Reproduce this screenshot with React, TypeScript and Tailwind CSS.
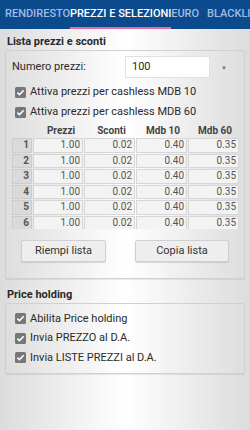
import React from 'react';

const rows = [1, 2, 3, 4, 5, 6];
const values = ['1.00', '0.02', '0.40', '0.35'];

const CheckIcon = () => (
  <svg width="11" height="11" viewBox="0 0 11 11" className="shrink-0">
    <rect x="0" y="0" width="11" height="11" rx="1.5" fill="#777777" />
    <path d="M2.4 5.6 L4.5 7.6 L8.7 3.2" fill="none" stroke="#ffffff" strokeWidth="1.5" />
  </svg>
);

const CheckRow: React.FC<{ label: string; h?: string }> = ({ label, h = 'h-[20px]' }) => (
  <div className={`flex items-center gap-[4px] pl-[9px] ${h}`}>
    <CheckIcon />
    <span className="text-[11px] text-[#2a2a2a]">{label}</span>
  </div>
);

const App: React.FC = () => {
  return (
    <div
      className="w-[250px] h-[430px] overflow-hidden bg-[linear-gradient(to_right,#dcdcdc,#ffffff_50%,#dcdcdc)]"
      style={{ fontFamily: 'Roboto, "Liberation Sans", sans-serif' }}
    >
      {/* tab bar */}
      <div className="h-[29px] bg-[#0c4a8e] flex pl-[5px] text-[11px] font-medium whitespace-nowrap">
        <div className="w-[70px] flex items-center justify-center text-[#9fbde3]">RENDIRESTO</div>
        <div className="w-[101px] flex items-center justify-center text-white relative">
          PREZZI E SELEZIONI
          <div className="absolute left-0 right-0 bottom-0 h-[2px] bg-[#e96a9f]" />
        </div>
        <div className="w-[44px] flex items-center justify-center text-[#9fbde3]">EURO</div>
        <div className="flex items-center pl-[8px] text-[#9fbde3]">BLACKLIST</div>
      </div>

      <div className="pl-[7px] pt-[6px] pb-[1px] text-[11px] leading-[14px] font-bold text-[#2a2a2a]">Lista prezzi e sconti</div>

      <div className="mx-[5px] border border-[#d0d0d0] rounded-[2px] shadow-[0_1px_1px_rgba(0,0,0,0.08)]">
        <div className="flex items-center pl-[6px] mt-[5px] h-[22px]">
          <span className="w-[113px] text-[11px] text-[#2a2a2a]">Numero prezzi:</span>
          <div className="w-[85px] h-[22px] bg-white border border-[#e0e0e0] flex items-center pl-[6px] text-[11px] text-[#2a2a2a]">100</div>
          <span className="ml-[11px] text-[6px] text-[#777]">▼</span>
        </div>
        <div className="mt-[4px]">
          <CheckRow label="Attiva prezzi per cashless MDB 10" />
          <CheckRow label="Attiva prezzi per cashless MDB 60" />
        </div>

        <div className="ml-[6px] mt-[1px] h-[106px] overflow-hidden">
          <div className="grid grid-cols-[20px_50px_51px_51px_51px] gap-x-[1px] h-[15px] items-center text-[10px] font-bold text-[#444]">
            <div />
            <div className="text-center pl-[6px]">Prezzi</div>
            <div className="text-center pl-[4px]">Sconti</div>
            <div className="text-center pl-[3px]">Mdb 10</div>
            <div className="text-center pl-[3px]">Mdb 60</div>
          </div>
          <div className="flex flex-col gap-y-[1px]">
            {rows.map(r => (
              <div key={r} className="grid grid-cols-[20px_50px_51px_51px_51px] gap-x-[1px] h-[14.6px]">
                <div className="bg-[#dadada] border border-[#cccccc] text-right pr-[2px] text-[10px] font-bold text-[#555] leading-[12px]">{r}</div>
                {values.map((v, i) => (
                  <div key={i} className="bg-[#f3f3f3] border border-[#d6d6d6] text-right pr-[2px] text-[10px] text-[#555] leading-[12px]">{v}</div>
                ))}
              </div>
            ))}
          </div>
        </div>

        <div className="flex pl-[15px] gap-[29px] mt-[11px] pb-[16px]">
          <button className="w-[85px] h-[22px] bg-[#eeeeee] border border-[#cfcfcf] rounded-[2px] shadow-[0_1px_1px_rgba(0,0,0,0.12)] text-[11px] text-[#333]">Riempi lista</button>
          <button className="w-[94px] h-[22px] bg-[#eeeeee] border border-[#cfcfcf] rounded-[2px] shadow-[0_1px_1px_rgba(0,0,0,0.12)] text-[11px] text-[#333]">Copia lista</button>
        </div>
      </div>

      <div className="pl-[7px] pt-[9px] pb-[1px] text-[11px] leading-[14px] font-bold text-[#2a2a2a]">Price holding</div>

      <div className="mx-[5px] border border-[#d0d0d0] rounded-[2px] shadow-[0_1px_1px_rgba(0,0,0,0.08)] pt-[5px] pb-[5px]">
        <CheckRow label="Abilita Price holding" h="h-[19.5px]" />
        <CheckRow label="Invia PREZZO al D.A." h="h-[19.5px]" />
        <CheckRow label="Invia LISTE PREZZI al D.A." h="h-[19.5px]" />
      </div>
    </div>
  );
};

export default App;
